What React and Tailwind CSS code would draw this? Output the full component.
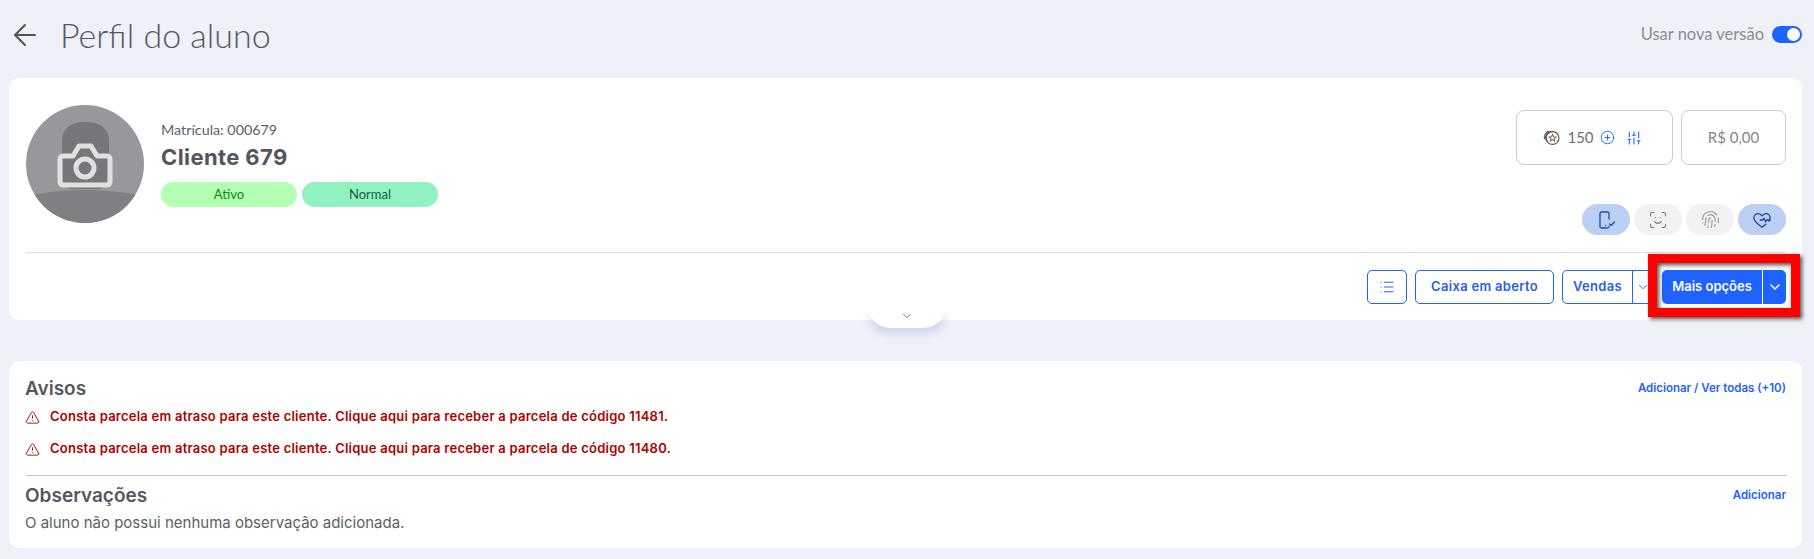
import React from 'react';
import { ArrowLeft, ChevronDown, CirclePlus, SlidersVertical, List, TriangleAlert, ScanFace, Fingerprint } from 'lucide-react';

const heading = "font-['Inter','Liberation_Sans',sans-serif]";

const Avatar = () => (
    <svg viewBox="0 0 118 118" className="w-[118px] h-[118px] shrink-0">
        <defs>
            <clipPath id="round"><circle cx="59" cy="59" r="59" /></clipPath>
        </defs>
        <g clipPath="url(#round)">
            <rect width="118" height="118" fill="#98989c" />
            <path d="M36 36c0-12 8-19 23-19s24 7 24 19v36c0 6-6 12-10 12H46c-4 0-10-6-10-12z" fill="#77777b" />
            <path d="M0 118V92c16-5 38-7 59-7s43 2 59 7v26z" fill="#808084" />
            <g fill="none" stroke="#e0e0e0" strokeWidth="5" strokeLinejoin="round">
                <path d="M37 51h10l6-10h12l6 10h10a3 3 0 0 1 3 3v23a3 3 0 0 1-3 3H37a3 3 0 0 1-3-3V54a3 3 0 0 1 3-3z" />
                <circle cx="59" cy="63" r="9" />
            </g>
        </g>
    </svg>
);

const CoinIcon = () => (
    <svg viewBox="0 0 16 16" className="w-[17px] h-[17px]" fill="none" stroke="#5b5757" strokeWidth="1.1">
        <circle cx="9" cy="8.500" r="6" />
        <path d="M3.600 11.500A6 6 0 0 1 8 2.200" />
        <path d="M1.600 9.500A6 6 0 0 1 5.500 2" />
        <path d="M9 5.200l1 2.100 2.200.3-1.600 1.500.4 2.200-2-1.100-2 1.100.4-2.200-1.600-1.500 2.200-.3z" stroke="#8a6a4a" />
    </svg>
);

const PhoneCheck = () => (
    <svg viewBox="0 0 20 20" className="w-5 h-5" fill="none" stroke="#1f49ae" strokeWidth="1.3" strokeLinecap="round" strokeLinejoin="round">
        <path d="M13 9V3.500A1.500 1.500 0 0 0 11.500 2h-6A1.500 1.500 0 0 0 4 3.500v13A1.500 1.500 0 0 0 5.500 18h6a1.500 1.500 0 0 0 1.500-1.500" />
        <path d="M13.500 14l1.500 1.500L18.500 12" />
        <path d="M9.500 15.500h.01" />
    </svg>
);

const HeartBeat = () => (
    <svg viewBox="0 0 20 20" className="w-[18px] h-[18px]" fill="none" stroke="#1f3f94" strokeWidth="1.4" strokeLinecap="round" strokeLinejoin="round">
        <path d="M17.500 11.500c1-1.400 1.500-2.600 1.500-3.900C19 5 17 3 14.600 3c-1.900 0-3.600 1-4.600 2.600C9 4 7.300 3 5.400 3 3 3 1 5 1 7.600 1 12 6.500 15.500 10 18c1.500-1 3-2.200 4.400-3.500" />
        <path d="M8 10h3l1.300-2 1.700 4 1.200-2H19" />
    </svg>
);

const StatusPill = ({ active, children }) => (
    <div className={`w-12 h-[31px] rounded-2xl flex items-center justify-center ${active ? 'bg-[#bccff5]' : 'bg-[#f2f2f2]'}`}>
        {children}
    </div>
);

const OutlineButton = ({ className, children }) => (
    <button className={`h-[34px] flex items-center justify-center border border-[#1e62ff] rounded-[5px] bg-white text-[#2a5fe6] text-[13px] font-semibold tracking-[0.3px] ${heading} ${className}`}>
        {children}
    </button>
);

const Warning = ({ codigo }) => (
    <div className="flex items-center h-[32px]">
        <TriangleAlert size={15} strokeWidth={1.5} className="text-[#b00000] -ml-px" />
        <span className={`ml-[10px] text-[13px] font-semibold text-[#b00000] tracking-[0.24px] ${heading}`}>
            Consta parcela em atraso para este cliente. Clique aqui para receber a parcela de código {codigo}.
        </span>
    </div>
);

const App = () => {
    return (
        <div className="w-[1814px] h-[559px] overflow-hidden bg-[#eef1f7] relative font-['Lato','Liberation_Sans',sans-serif]">
            <div className="h-[78px] pl-[14px] pr-3 flex items-center justify-between pb-[9px]">
                <div className="flex items-center">
                    <ArrowLeft size={34} strokeWidth={1.45} className="text-[#51555a] -ml-[6px]" />
                    <h1 className="ml-[18px] text-[34px] font-light text-[#55585e]">Perfil do aluno</h1>
                </div>
                <div className="flex items-center gap-2">
                    <span className="text-[16.5px] text-[#8a8d91]">Usar nova versão</span>
                    <div className="w-[30px] h-[17px] rounded-full bg-[#1e62ff] flex items-center justify-end pr-[2px]">
                        <div className="w-[13px] h-[13px] rounded-full bg-white" />
                    </div>
                </div>
            </div>

            <div className="mx-[9px] w-[1793px] h-[242px] bg-white rounded-[10px] pl-[17px] pr-[16px] relative">
                <div className="h-[175px] flex justify-between border-b border-[#dcdcdc]">
                    <div className="flex items-start pt-[27px]">
                        <Avatar />
                        <div className="ml-[17px] pt-[15px]">
                            <p className="text-[14.3px] leading-[20px] text-[#5b5f64]">Matrícula: 000679</p>
                            <p className={`text-[22px] leading-[32px] mt-px font-bold tracking-[0.4px] text-[#51555c] ${heading}`}>Cliente 679</p>
                            <div className="flex gap-[5px] mt-[9px]">
                                <span className="w-[136px] h-[25px] pt-px rounded-[13px] bg-[#b4ffb4] text-[#0f8a0f] text-[13px] flex items-center justify-center">Ativo</span>
                                <span className="w-[136px] h-[25px] pt-px rounded-[13px] bg-[#8ff2c0] text-[#14603c] text-[13px] flex items-center justify-center">Normal</span>
                            </div>
                        </div>
                    </div>
                    <div className="flex flex-col items-end pt-[32px]">
                        <div className="flex gap-2">
                            <div className="w-[157px] h-[55px] pr-[4px] border border-[#cccccc] rounded-lg flex items-center justify-center text-[15px] text-[#6c6f74]">
                                <CoinIcon />
                                <span className="ml-[7px]">150</span>
                                <CirclePlus size={15} strokeWidth={1.5} className="ml-[6px] text-[#1e62ff]" />
                                <SlidersVertical size={16} strokeWidth={1.6} className="ml-[11px] text-[#1e62ff]" />
                            </div>
                            <div className="w-[105px] h-[55px] border border-[#cccccc] rounded-lg flex items-center justify-center text-[15px] text-[#83868b]">R$ 0,00</div>
                        </div>
                        <div className="flex gap-1 mt-[39px]">
                            <StatusPill active><PhoneCheck /></StatusPill>
                            <StatusPill><ScanFace size={20} strokeWidth={1.3} className="text-[#77797e]" /></StatusPill>
                            <StatusPill><Fingerprint size={19} strokeWidth={1.5} className="text-[#a09a94]" /></StatusPill>
                            <StatusPill active><HeartBeat /></StatusPill>
                        </div>
                    </div>
                </div>

                <div className="flex justify-end items-center gap-2 pt-[17px]">
                    <OutlineButton className="w-10">
                        <List size={16} strokeWidth={1.6} />
                    </OutlineButton>
                    <OutlineButton className="w-[139px]">Caixa em aberto</OutlineButton>
                    <div className={`w-[92px] h-[34px] flex border border-[#1e62ff] rounded-[5px] text-[#2a5fe6] text-[13px] font-semibold tracking-[0.3px] ${heading}`}>
                        <span className="w-[70px] flex items-center justify-center border-r border-[#1e62ff]">Vendas</span>
                        <span className="flex-1 flex items-center justify-center"><ChevronDown size={14} strokeWidth={1.6} /></span>
                    </div>
                    <div className={`w-[124px] h-[34px] flex bg-[#1e62ff] rounded-[5px] text-white text-[13px] font-semibold ${heading}`}>
                        <span className="w-[101px] flex items-center justify-center border-r border-white">Mais opções</span>
                        <span className="flex-1 flex items-center justify-center"><ChevronDown size={16} strokeWidth={2.2} /></span>
                    </div>
                </div>

                <div className="absolute left-[858px] -bottom-[8px] w-[80px] h-[24px] bg-white rounded-b-[24px] shadow-[0_8px_10px_-3px_rgba(180,190,220,0.6)] flex items-center justify-center">
                    <ChevronDown size={14} strokeWidth={1.5} className="text-[#5a6a80]" />
                </div>
            </div>

            <div className="mx-[9px] mt-[41px] w-[1793px] h-[187px] bg-white rounded-[10px] pl-[17px] pr-[16px] pt-[15px]">
                <div className="flex justify-between items-center h-[26px]">
                    <h2 className={`text-[19px] font-semibold -ml-px text-[#55585e] ${heading}`}>Avisos</h2>
                    <a className={`text-[11.5px] font-semibold text-[#1e62ff] ${heading}`}>Adicionar / Ver todas (+10)</a>
                </div>
                <div className="-mt-px">
                    <Warning codigo="11481" />
                    <Warning codigo="11480" />
                </div>
                <div className="border-t border-[#c9c9c9] mt-[10px] pt-[7px]">
                    <div className="flex justify-between items-center h-[26px]">
                        <h2 className={`text-[19px] font-semibold -ml-px text-[#55585e] ${heading}`}>Observações</h2>
                        <a className={`text-[11.5px] font-semibold text-[#1e62ff] ${heading}`}>Adicionar</a>
                    </div>
                    <p className={`mt-[3px] text-[15px] -ml-px text-[#5b5f64] ${heading}`}>O aluno não possui nenhuma observação adicionada.</p>
                </div>
            </div>

            <div className="absolute left-[1648px] top-[254px] w-[152px] h-[63px] border-[9px] border-[#ff0000] shadow-[2px_2px_4px_rgba(0,0,0,0.7),inset_2px_2px_4px_rgba(0,0,0,0.7)]" />
        </div>
    );
};

export default App;
